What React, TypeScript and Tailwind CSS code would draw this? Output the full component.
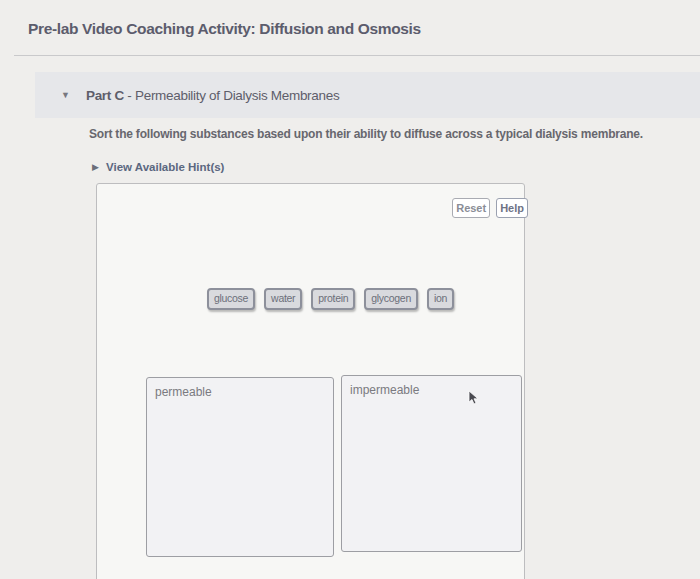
import React from 'react';

const chips = ['glucose', 'water', 'protein', 'glycogen', 'ion'];

const Chip: React.FC<{ label: string }> = ({ label }) => (
  <div className="h-[22px] px-[5px] flex items-center rounded-[4px] border-2 border-[#8d909b] bg-[#d9dade] text-[10.5px] tracking-[-0.3px] text-[#6c6f7a] shadow-[1px_2px_2px_rgba(0,0,0,0.25)]">
    {label}
  </div>
);

const DropZone: React.FC<{ label: string; className?: string }> = ({ label, className }) => (
  <div
    className={`rounded-[3px] border border-[#9d9ea3] bg-[#f2f2f4] px-[8px] pt-[5px] text-[12px] text-[#7a7a80] ${className ?? ''}`}
  >
    {label}
  </div>
);

export default function App() {
  return (
    <div
      className="w-[700px] h-[579px] overflow-hidden bg-[#efeeec]"
      style={{ fontFamily: '"Liberation Sans", Arial, sans-serif' }}
    >
      <h1 className="pl-[28px] pt-[17px] h-[55px] text-[15.5px] font-bold tracking-[-0.35px] text-[#5c5c6c]">
        Pre-lab Video Coaching Activity: Diffusion and Osmosis
      </h1>
      <div className="ml-[14px] border-t border-[#c9c9cb]" />

      <div className="ml-[35px] mt-[16px] h-[46px] bg-[#e6e7ea] flex items-center pl-[26px] pt-[2px]">
        <span className="text-[9px] text-[#77777f] mr-[16px]">▼</span>
        <span className="text-[13.5px] text-[#5e5e6a] tracking-[-0.3px]">
          <b className="font-bold">Part C</b> - Permeability of Dialysis Membranes
        </span>
      </div>

      <div className="pl-[89px] pt-[7px]">
        <p className="text-[12px] font-bold text-[#67676e] tracking-[-0.2px]">
          Sort the following substances based upon their ability to diffuse across a typical dialysis membrane.
        </p>
        <div className="mt-[16px] flex items-center pl-[3px]">
          <span className="text-[9px] text-[#6b6f7a] mr-[7px]">▶</span>
          <span className="text-[11.5px] font-bold text-[#5b6780]">View Available Hint(s)</span>
        </div>
      </div>

      <div className="ml-[96px] mt-[7px] w-[429px] h-[420px] rounded-[3px] border border-[#bdbdbf] bg-[#f7f7f5] relative">
        <div className="flex justify-end gap-[6px] pt-[14px] pr-[0px] mr-[-4px]">
          <button className="h-[20px] px-[3px] rounded-[3px] border border-[#a9abb2] bg-white text-[11px] font-bold text-[#8a8d96]">
            Reset
          </button>
          <button className="h-[20px] px-[3px] rounded-[3px] border border-[#9ba1b0] bg-white text-[11px] font-bold text-[#6e7385]">
            Help
          </button>
        </div>

        <div className="mt-[70px] flex gap-[9px] pl-[110px]">
          {chips.map((c) => (
            <Chip key={c} label={c} />
          ))}
        </div>

        <div className="mt-[67px] flex gap-[7px] pl-[49px]">
          <DropZone label="permeable" className="w-[188px] h-[180px]" />
          <DropZone label="impermeable" className="w-[181px] h-[177px] -mt-[2px]" />
        </div>

        <svg
          className="absolute left-[371px] top-[206px]"
          width="12"
          height="16"
          viewBox="0 0 12 16"
        >
          <path d="M1 1 L1 12 L4 9.5 L6 14 L8 13 L6 8.8 L10 8.8 Z" fill="#4a4a50" stroke="#ffffff" strokeWidth="0.8" />
        </svg>
      </div>
    </div>
  );
}
